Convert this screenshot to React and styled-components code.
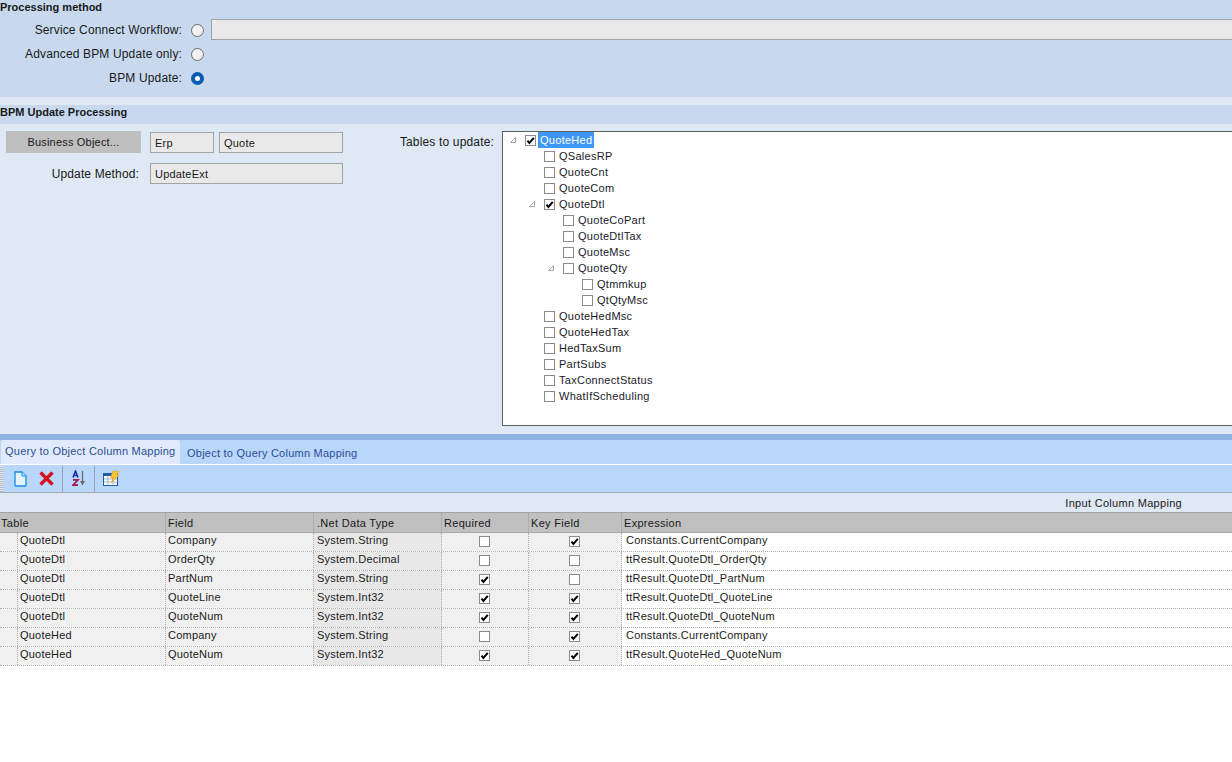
import React from "react";
import styled, { createGlobalStyle } from "styled-components";

const GlobalStyle = createGlobalStyle`
  html, body {
    margin: 0;
    padding: 0;
    background: #fff;
    overflow: hidden;
  }
  body {
    font-family: "Liberation Sans", Arial, sans-serif;
    font-size: 12px;
    color: #1a1a1a;
  }
`;

const Page = styled.div`
  width: 1232px;
  height: 762px;
  overflow: hidden;
  background: #fff;
`;

const MethodPanel = styled.section`
  height: 97px;
  background: #c8d9ef;
`;

const PanelTitle = styled.div`
  height: 14px;
  line-height: 14px;
  font-size: 11px;
  font-weight: bold;
`;

const MethodRows = styled.div`
  display: flex;
  flex-direction: column;
  padding-top: 4px;
`;

const MethodRow = styled.div`
  display: flex;
  align-items: center;
  height: 24px;
`;

const MethodLabel = styled.label`
  flex: none;
  width: 182px;
  text-align: right;
  letter-spacing: 0.14px;
  white-space: nowrap;
`;

const Radio = styled.span`
  box-sizing: border-box;
  flex: none;
  width: 13px;
  height: 13px;
  margin-left: 9px;
  border-radius: 50%;
  background: ${(p) => (p.$on ? "#fff" : "#f2f2f2")};
  border: ${(p) => (p.$on ? "4px solid #0a5cb0" : "1px solid #6b6b6b")};
`;

const ReadOnlyInput = styled.div`
  box-sizing: border-box;
  height: 21px;
  width: ${(p) => p.$width}px;
  flex: none;
  padding-left: 4px;
  line-height: 20px;
  font-size: 11px;
  letter-spacing: 0.2px;
  background: #e9e9e9;
  border: 1px solid #a3a3a3;
`;

const WideInput = styled(ReadOnlyInput)`
  align-self: flex-start;
  margin: 1px 0 0 7px;
  width: 1040px;
  border-right: none;
`;

const UpdatePanel = styled.section`
  height: 337px;
  padding-top: 8px;
  box-sizing: border-box;
  background: #dfe8f5;
`;

const UpdateTitle = styled(PanelTitle)`
  height: 19px;
  line-height: 15px;
  background: #c8d9ef;
`;

const UpdateBody = styled.div`
  display: flex;
  padding: 7px 0 0 6px;
`;

const ObjectColumn = styled.div`
  width: 337px;
  flex: none;
  display: flex;
  flex-direction: column;
  gap: 10px;
`;

const ObjectRow = styled.div`
  display: flex;
  align-items: center;
`;

const ObjectButton = styled.button`
  width: 135px;
  height: 22px;
  flex: none;
  padding: 0;
  border: none;
  background: #bfbfbf;
  color: #1a1a1a;
  font: 11px "Liberation Sans", Arial, sans-serif;
  letter-spacing: 0.2px;
`;

const ObjectInputs = styled.div`
  display: flex;
  gap: 5px;
  margin-left: 9px;
`;

const MethodCaption = styled.label`
  width: 133px;
  flex: none;
  text-align: right;
  letter-spacing: 0.14px;
  margin-right: 11px;
  white-space: nowrap;
`;

const TablesLabel = styled.label`
  width: 151px;
  flex: none;
  height: 22px;
  line-height: 22px;
  text-align: right;
  letter-spacing: 0.16px;
`;

const TreeBox = styled.div`
  box-sizing: border-box;
  flex: none;
  width: 740px;
  height: 295px;
  margin-left: 8px;
  background: #fff;
  border: 1px solid #5f5f5f;
`;

const TreeRow = styled.div`
  display: flex;
  align-items: center;
  height: 16px;
  padding-left: ${(p) => 22 + p.$level * 19}px;
`;

const Twisty = styled.span`
  flex: none;
  display: flex;
  width: 19px;
  margin-left: -19px;
  padding-left: 3px;
  box-sizing: border-box;
  visibility: ${(p) => (p.$show ? "visible" : "hidden")};
`;

const TreeLabel = styled.span`
  margin-left: 2px;
  padding: 0 2px;
  height: 16px;
  line-height: 16px;
  font-size: 11px;
  letter-spacing: 0.28px;
  color: ${(p) => (p.$selected ? "#fff" : "#1a1a2a")};
  background: ${(p) => (p.$selected ? "#3e97f5" : "transparent")};
`;

const Box = styled.span`
  box-sizing: border-box;
  flex: none;
  display: block;
  width: 11px;
  height: 11px;
  background: #fff;
  border: 1px solid #8c8c8c;
  position: relative;
`;

const Tick = styled.svg`
  position: absolute;
  left: 0;
  top: 0;
  width: 9px;
  height: 9px;
`;

const Divider = styled.div`
  height: 6px;
  background: #8fb3e0;
`;

const TabStrip = styled.div`
  display: flex;
  align-items: flex-end;
  height: 24px;
  padding-left: 1px;
  background: #b9d6fb;
`;

const Tab = styled.div`
  height: ${(p) => (p.$active ? 24 : 22)}px;
  width: ${(p) => (p.$active ? 179 : "auto")}px;
  box-sizing: border-box;
  padding: 0 ${(p) => (p.$active ? 0 : 7)}px 0 ${(p) => (p.$active ? 4 : 7)}px;
  line-height: ${(p) => (p.$active ? 22 : 23)}px;
  font-size: 11px;
  letter-spacing: 0.24px;
  color: #2b4f96;
  background: ${(p) => (p.$active ? "#e0eafa" : "transparent")};
  border-radius: 3px 3px 0 0;
  white-space: nowrap;
`;

const Toolbar = styled.div`
  display: flex;
  align-items: center;
  height: 28px;
  box-sizing: border-box;
  margin-top: 1px;
  background: #b9d6fb;
  border-bottom: 1px solid #a3a9b3;
`;

const Grip = styled.span`
  width: 4px;
  height: 26px;
  flex: none;
  background: repeating-linear-gradient(#e2e6ec 0 1px, #b4bcc8 1px 2px);
`;

const ToolIcon = styled.svg`
  flex: none;
  display: block;
  margin-left: ${(p) => p.$left}px;
`;

const ToolSeparator = styled.span`
  flex: none;
  width: 1px;
  height: 26px;
  margin-left: ${(p) => p.$left}px;
  background: #9aa3af;
`;

const GroupBar = styled.div`
  height: 19px;
  box-sizing: border-box;
  padding: 4px 50px 0 0;
  line-height: 13px;
  text-align: right;
  font-size: 11px;
  letter-spacing: 0.3px;
  background: #dfe8f5;
`;

const COLUMNS = "166px 148px 128px 87px 93px 1fr";

const HeaderRow = styled.div`
  display: grid;
  grid-template-columns: ${COLUMNS};
  grid-template-rows: 19px;
  height: 21px;
  box-sizing: border-box;
  background: #c0c0c0;
  border-top: 1px solid #a3a3a3;
  border-bottom: 1px solid #a8a8a8;
`;

const HeaderCell = styled.div`
  padding-left: ${(p) => p.$pad ?? 2}px;
  line-height: 20px;
  font-size: 11px;
  letter-spacing: 0.3px;
  border-right: 1px solid #adadad;
  &:last-child {
    border-right: none;
  }
`;

const DataRow = styled.div`
  display: grid;
  grid-template-columns: ${COLUMNS};
  grid-template-rows: 18px;
  height: 19px;
  box-sizing: border-box;
  border-bottom: 1px dotted #b0b0b0;
`;

const Cell = styled.div`
  padding-left: ${(p) => p.$pad ?? 2}px;
  line-height: 15px;
  font-size: 11px;
  letter-spacing: 0.22px;
  background: ${(p) => p.$bg || "#f0f0f0"};
  border-right: 1px dotted #b0b0b0;
  white-space: nowrap;
`;

const TableCell = styled(Cell)`
  display: flex;
  padding-left: 0;
`;

const CheckCell = styled(Cell)`
  display: flex;
  justify-content: center;
  padding: 3px 1px 0 0;
`;

const RowSelector = styled.span`
  width: 18px;
  flex: none;
  margin-right: 2px;
  border-right: 1px dotted #b0b0b0;
  box-sizing: border-box;
`;

const ExpressionCell = styled(Cell)`
  padding-left: 4px;
  background: #fff;
  border-right: none;
`;

const treeItems = [
  { label: "QuoteHed", level: 0, checked: true, open: true, selected: true },
  { label: "QSalesRP", level: 1 },
  { label: "QuoteCnt", level: 1 },
  { label: "QuoteCom", level: 1 },
  { label: "QuoteDtl", level: 1, checked: true, open: true },
  { label: "QuoteCoPart", level: 2 },
  { label: "QuoteDtlTax", level: 2 },
  { label: "QuoteMsc", level: 2 },
  { label: "QuoteQty", level: 2, open: true },
  { label: "Qtmmkup", level: 3 },
  { label: "QtQtyMsc", level: 3 },
  { label: "QuoteHedMsc", level: 1 },
  { label: "QuoteHedTax", level: 1 },
  { label: "HedTaxSum", level: 1 },
  { label: "PartSubs", level: 1 },
  { label: "TaxConnectStatus", level: 1 },
  { label: "WhatIfScheduling", level: 1 },
];

const mappings = [
  ["QuoteDtl", "Company", "System.String", false, true, "Constants.CurrentCompany"],
  ["QuoteDtl", "OrderQty", "System.Decimal", false, false, "ttResult.QuoteDtl_OrderQty"],
  ["QuoteDtl", "PartNum", "System.String", true, false, "ttResult.QuoteDtl_PartNum"],
  ["QuoteDtl", "QuoteLine", "System.Int32", true, true, "ttResult.QuoteDtl_QuoteLine"],
  ["QuoteDtl", "QuoteNum", "System.Int32", true, true, "ttResult.QuoteDtl_QuoteNum"],
  ["QuoteHed", "Company", "System.String", false, true, "Constants.CurrentCompany"],
  ["QuoteHed", "QuoteNum", "System.Int32", true, true, "ttResult.QuoteHed_QuoteNum"],
];

const Checkbox = ({ checked }) => (
  <Box>
    {checked && (
      <Tick viewBox="0 0 9 9">
        <path d="M1.5 4.6 L3.4 7 L7.8 1.8" fill="none" stroke="#000" strokeWidth="2" />
      </Tick>
    )}
  </Box>
);

const Triangle = () => (
  <svg width="8" height="8" viewBox="0 0 8 8">
    <path d="M6.5 1.5 V6.5 H1.5 Z" fill="#fff" stroke="#a6a6a6" />
  </svg>
);

const App = () => (
  <Page>
    <GlobalStyle />
    <MethodPanel>
      <PanelTitle>Processing method</PanelTitle>
      <MethodRows>
        <MethodRow>
          <MethodLabel>Service Connect Workflow:</MethodLabel>
          <Radio />
          <WideInput />
        </MethodRow>
        <MethodRow>
          <MethodLabel>Advanced BPM Update only:</MethodLabel>
          <Radio />
        </MethodRow>
        <MethodRow>
          <MethodLabel>BPM Update:</MethodLabel>
          <Radio $on />
        </MethodRow>
      </MethodRows>
    </MethodPanel>
    <UpdatePanel>
      <UpdateTitle>BPM Update Processing</UpdateTitle>
      <UpdateBody>
        <ObjectColumn>
          <ObjectRow>
            <ObjectButton>Business Object...</ObjectButton>
            <ObjectInputs>
              <ReadOnlyInput $width={64}>Erp</ReadOnlyInput>
              <ReadOnlyInput $width={124}>Quote</ReadOnlyInput>
            </ObjectInputs>
          </ObjectRow>
          <ObjectRow>
            <MethodCaption>Update Method:</MethodCaption>
            <ReadOnlyInput $width={193}>UpdateExt</ReadOnlyInput>
          </ObjectRow>
        </ObjectColumn>
        <TablesLabel>Tables to update:</TablesLabel>
        <TreeBox>
          {treeItems.map((item) => (
            <TreeRow key={item.label} $level={item.level}>
              <Twisty $show={item.open}>
                <Triangle />
              </Twisty>
              <Checkbox checked={item.checked} />
              <TreeLabel $selected={item.selected}>{item.label}</TreeLabel>
            </TreeRow>
          ))}
        </TreeBox>
      </UpdateBody>
    </UpdatePanel>
    <Divider />
    <TabStrip>
      <Tab $active>Query to Object Column Mapping</Tab>
      <Tab>Object to Query Column Mapping</Tab>
    </TabStrip>
    <Toolbar>
      <Grip />
      <ToolIcon $left={10} width="13" height="16" viewBox="0 0 13 16">
        <path d="M1 1 H8 L12 5 V14.3 Q12 15 11.3 15 H1.7 Q1 15 1 14.3 Z" fill="#e4f2ff" stroke="#0f8fe8" strokeWidth="1.3" />
        <path d="M8 1 V5 H12" fill="#cfe8fb" stroke="#0f8fe8" />
      </ToolIcon>
      <ToolIcon $left={12} width="15" height="15" viewBox="0 0 15 15">
        <path d="M1.5 1.5 L13.5 13.5 M13.5 1.5 L1.5 13.5" stroke="#d4121e" strokeWidth="3.4" />
      </ToolIcon>
      <ToolSeparator $left={8} />
      <ToolIcon $left={9} width="14" height="17" viewBox="0 0 14 17">
        <path d="M1 7.5 L3.5 1 L6 7.5 M1.8 5.5 H5.2" fill="none" stroke="#1f2fa8" strokeWidth="1.6" />
        <path d="M1 9.8 H6 L1 15.2 H6" fill="none" stroke="#a01c50" strokeWidth="1.7" />
        <path d="M10.5 1 V12" stroke="#666" strokeWidth="1.2" />
        <path d="M8 11 L10.5 15.5 L13 11 Z" fill="#666" />
      </ToolIcon>
      <ToolSeparator $left={8} />
      <ToolIcon $left={8} width="16" height="15" viewBox="0 0 16 15">
        <rect x="0.5" y="2.5" width="14" height="12" fill="#fff" stroke="#1f5fa8" />
        <path d="M0.5 4 H14.5" stroke="#1f5fa8" strokeWidth="2" />
        <path d="M1 8 H14 M1 11 H14 M5 5 V14 M10 5 V14" stroke="#a8b8cc" />
        <path d="M10 0 H16 L14 4 H16 L8.5 11.5 L10.5 6.5 H7.5 Z" fill="#f5c52e" stroke="#e09a10" strokeWidth="0.6" />
      </ToolIcon>
    </Toolbar>
    <GroupBar>Input Column Mapping</GroupBar>
    <HeaderRow>
      <HeaderCell $pad={1}>Table</HeaderCell>
      <HeaderCell>Field</HeaderCell>
      <HeaderCell $pad={3}>.Net Data Type</HeaderCell>
      <HeaderCell>Required</HeaderCell>
      <HeaderCell>Key Field</HeaderCell>
      <HeaderCell>Expression</HeaderCell>
    </HeaderRow>
    {mappings.map(([table, field, type, required, key, expression]) => (
      <DataRow key={table + field}>
        <TableCell>
          <RowSelector />
          {table}
        </TableCell>
        <Cell>{field}</Cell>
        <Cell $bg="#e8e8e8" $pad={3}>{type}</Cell>
        <CheckCell>
          <Checkbox checked={required} />
        </CheckCell>
        <CheckCell>
          <Checkbox checked={key} />
        </CheckCell>
        <ExpressionCell>{expression}</ExpressionCell>
      </DataRow>
    ))}
  </Page>
);

export default App;
